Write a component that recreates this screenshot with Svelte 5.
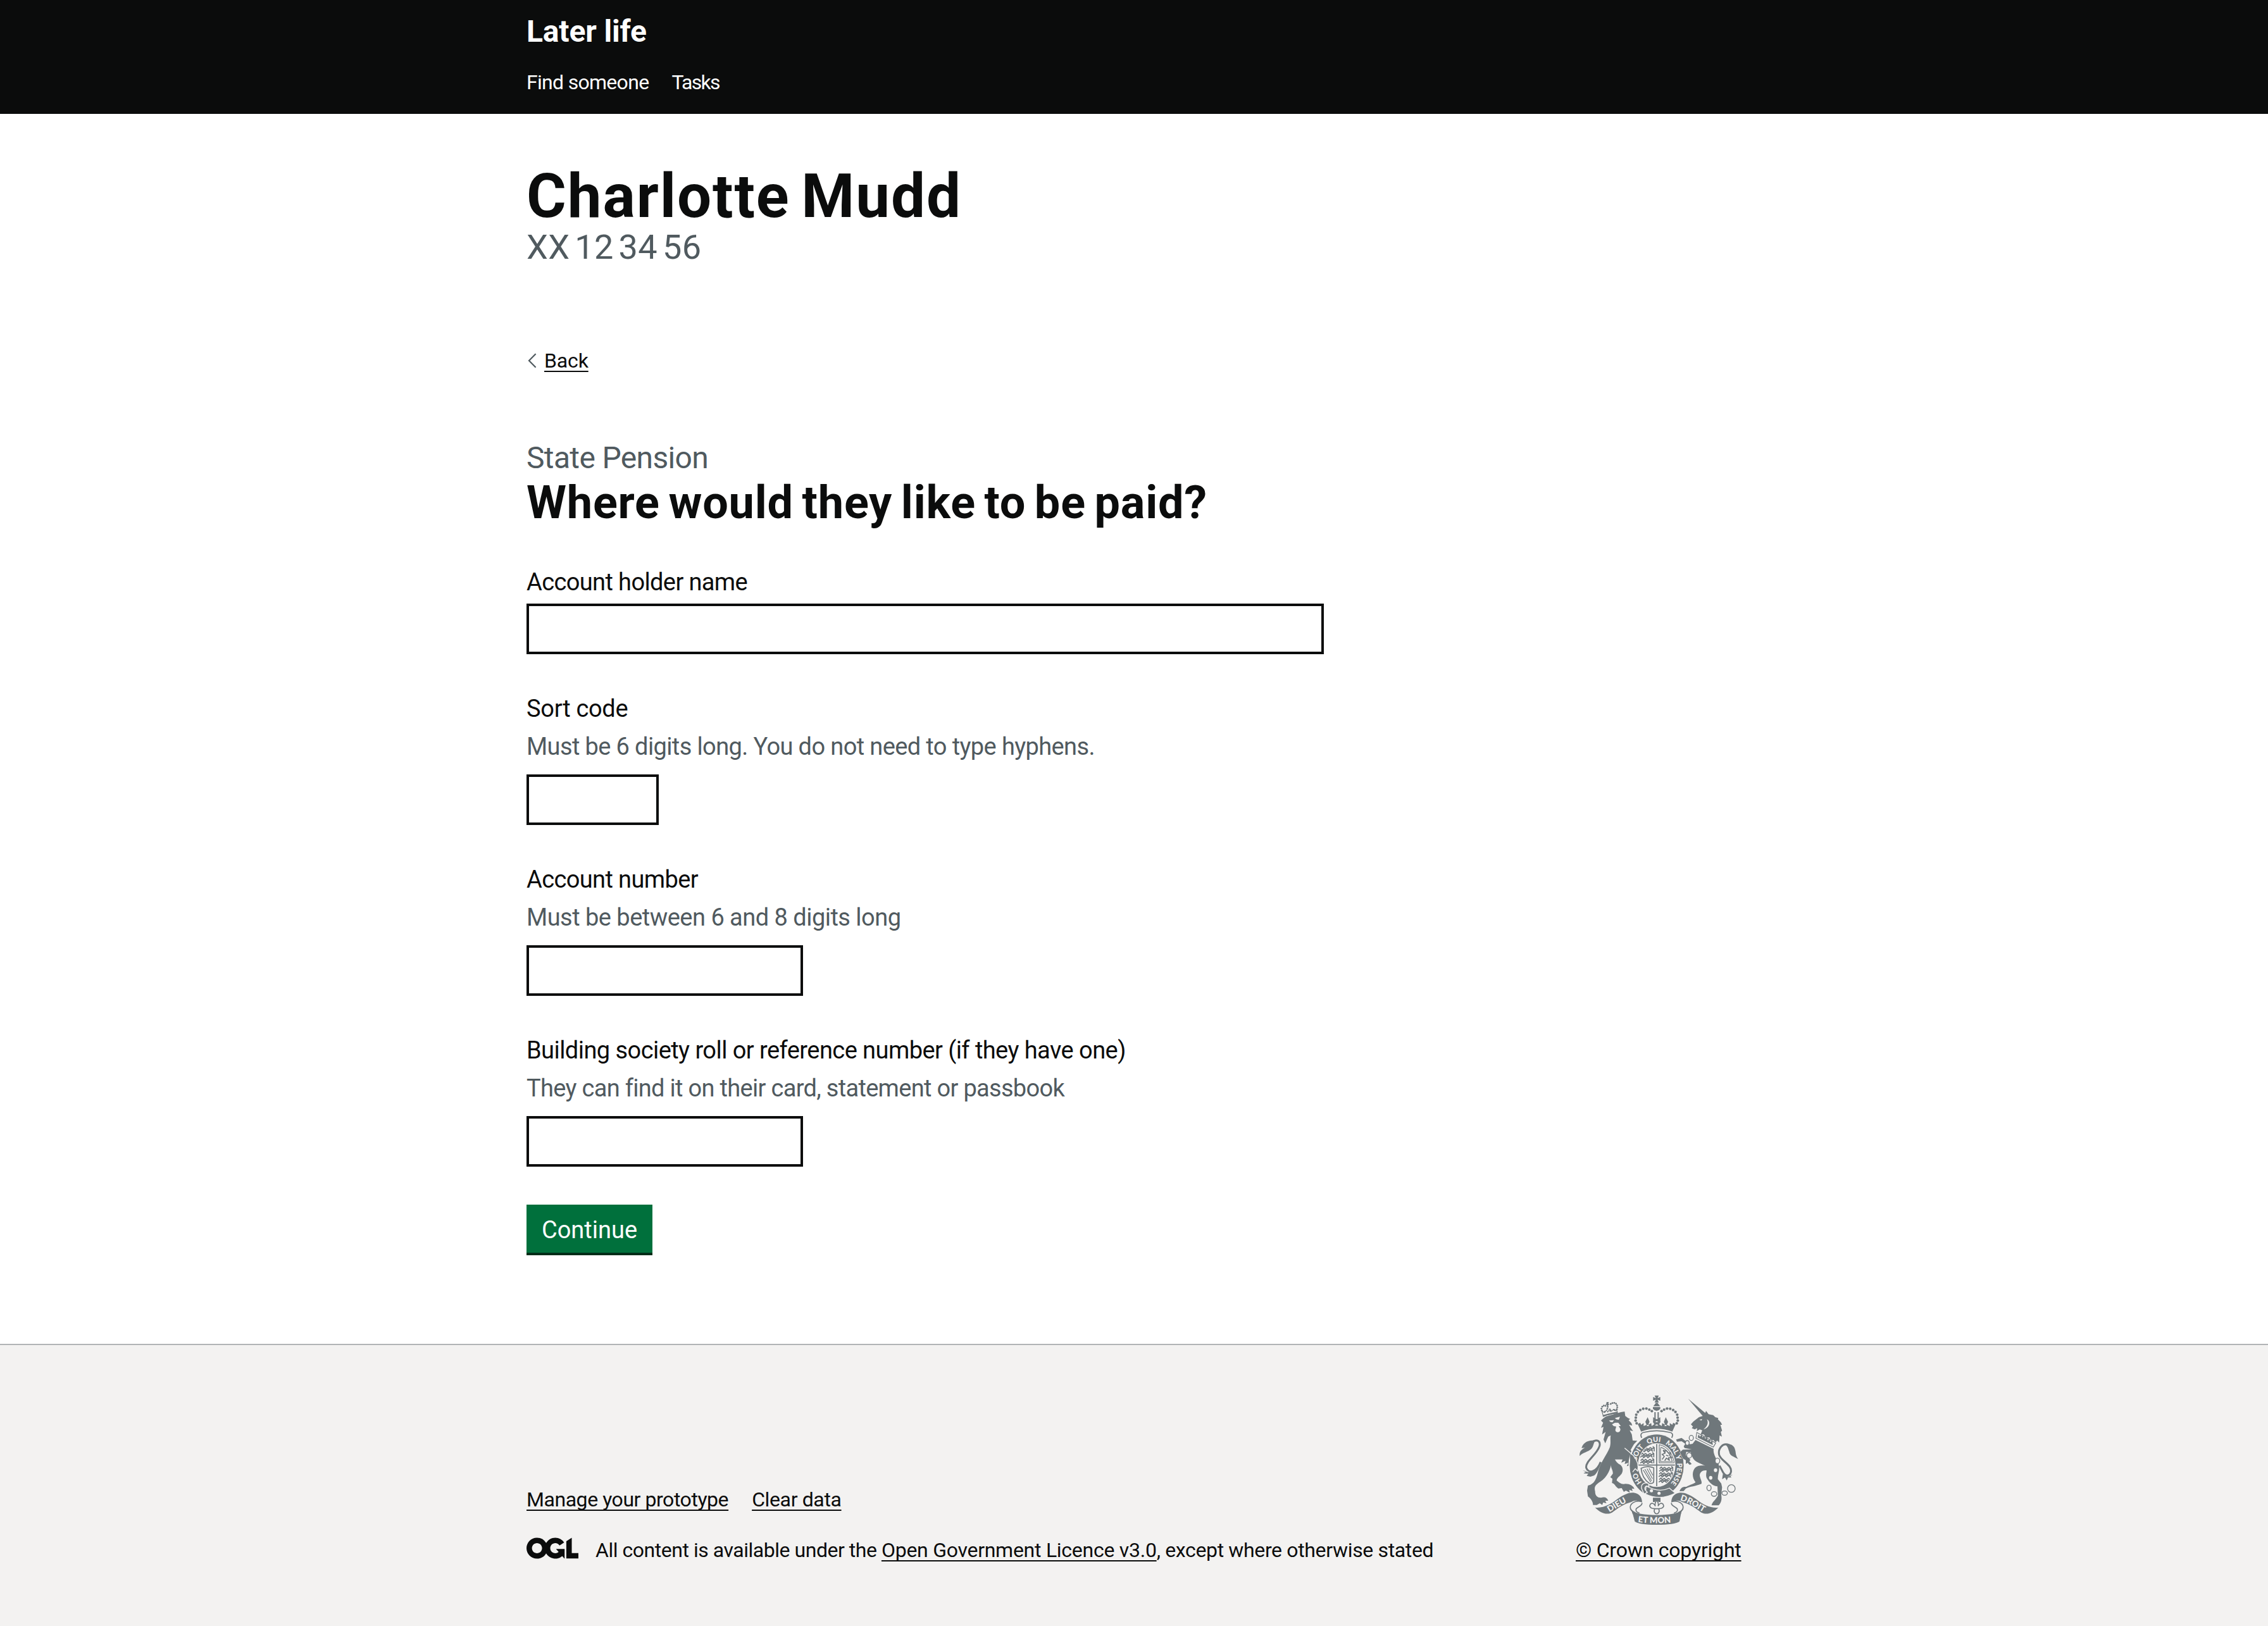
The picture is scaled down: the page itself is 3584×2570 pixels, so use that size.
<script>
  const navigation = [
    { label: 'Find someone', tone: 'find' },
    { label: 'Tasks', tone: 'tasks' }
  ];

  const fields = [
    { id: 'holder', label: 'Account holder name', hint: '' },
    { id: 'sort', label: 'Sort code', hint: 'Must be 6 digits long. You do not need to type hyphens.' },
    { id: 'number', label: 'Account number', hint: 'Must be between 6 and 8 digits long' },
    {
      id: 'roll',
      label: 'Building society roll or reference number (if they have one)',
      hint: 'They can find it on their card, statement or passbook'
    }
  ];

  // Pearls along the left arch of the royal crown; the right arch mirrors them.
  const pearls = [
    [375, 182], [374, 196], [379, 209], [377, 168], [385, 155], [396, 146], [410, 140], [425, 139], [439, 144], [451, 151]
  ];

  const lionPearls = [
    [214, 148], [212, 139], [216, 130], [223, 125], [231, 126], [256, 117], [264, 113], [273, 112],
    [281, 116], [286, 124], [287, 133], [285, 142], [240, 140], [228, 154], [254, 150], [274, 146]
  ];

  const chain = [
    [638, 278, 10, 12], [619, 302, 9, 11], [628, 361, 12, 13], [762, 387, 11, 13],
    [722, 515, 10, 13], [746, 544, 13, 11], [796, 540, 13, 10], [828, 518, 18, 18]
  ];

  const passant = [[396, 334], [394, 362], [394, 390], [484, 428], [482, 454], [482, 480]];

  const motto = [
    ['HO', 80], ['SOIT', 188], ['QUI', 286], ['MAL', 371], ['Y', 447], ['PENSE', 483]
  ];
</script>

<div class="page">
  <header class="header">
    <div class="container">
      <a class="service" href="#home">Later life</a>
      <nav class="nav">
        {#each navigation as item}
          <a class={item.tone} href="#{item.tone}">{item.label}</a>
        {/each}
      </nav>
    </div>
  </header>

  <main class="container main">
    <h1 class="person">Charlotte Mudd</h1>
    <p class="nino">XX 12 34 56</p>

    <a class="back" href="#back">
      <svg class="chevron" viewBox="0 0 16 24" aria-hidden="true"><path d="M14.6 1.2 4 12l10.6 10.8" /></svg>
      <span class="link">Back</span>
    </a>

    <p class="caption">State Pension</p>
    <h2 class="question">Where would they like to be paid?</h2>

    <form class="form">
      {#each fields as field}
        <div class="field {field.id}">
          <label for={field.id}>{field.label}</label>
          {#if field.hint}<p class="hint">{field.hint}</p>{/if}
          <input id={field.id} type="text" />
        </div>
      {/each}
      <button class="button" type="button">Continue</button>
    </form>
  </main>

  <footer class="footer">
    <div class="container footer-row">
      <div class="meta">
        <div class="links">
          <a class="link manage" href="#manage">Manage your prototype</a>
          <a class="link clear" href="#clear">Clear data</a>
        </div>
        <div class="licence">
          <svg class="ogl" viewBox="0 0 483.2 195.7" aria-hidden="true">
            <path d="M421.5 142.8V.1l-50.7 32.3v161.1h112.4v-50.7zm-122.3-9.6A47.12 47.12 0 0 1 221 97.8c0-26 21.1-47.1 47.1-47.1 16.7 0 31.4 8.7 39.7 21.8l42.7-27.2A97.63 97.63 0 0 0 268.1 0c-36.5 0-68.3 20.1-85.1 49.7A98 98 0 0 0 97.8 0C43.9 0 0 43.9 0 97.8s43.9 97.8 97.8 97.8c36.5 0 68.3-20.1 85.1-49.7a97.76 97.76 0 0 0 149.6 25.4l19.4 22.2h3v-87.8h-80l24.3 27.5zM97.8 145c-26 0-47.1-21.1-47.1-47.1s21.1-47.1 47.1-47.1 47.1 21.1 47.1 47.1S123.8 145 97.8 145" />
          </svg>
          <p><span class="intro">All content is available under the{' '}</span><a class="link ogl-link" href="#licence">Open Government Licence v3.0</a><span class="outro">, except where otherwise stated</span></p>
        </div>
      </div>

      <div class="copyright">
        <svg class="crest" viewBox="90 60 786 660" role="img" aria-label="Royal coat of arms">
          <defs>
            <path id="motto" d="M474 523A97 113 0 0 1 474 297A97 113 0 0 1 474 523" />
            <path id="dieu" d="M250 631C288 609 316 588 356 572" />
            <path id="droit" d="M584 575C624 582 660 612 712 640" />
            <path id="mon" d="M385 677Q474 688 566 677" />
            <clipPath id="oval"><ellipse cx="474" cy="407" rx="86" ry="100" /></clipPath>
          </defs>

          <!-- Lion: tail, body, face and small crown -->
          <path class="line tail" d="M208 392C190 440 150 450 140 420C134 388 198 352 204 312C206 288 186 284 164 300" />
          <path d="M186 290C160 288 126 294 118 326L134 325C114 334 107 346 109 364C124 346 148 346 164 330C178 314 172 300 186 290Z" />
          <path d="M124 432L141 437L127 446L150 448L142 458L160 462L178 456C196 440 200 418 214 392C196 408 186 430 162 438C150 442 136 440 124 432Z" />
          <path d="M210 196C222 184 230 176 242 174L304 156L322 153L325 174L338 184L348 188L341 194L354 208L358 220L343 216L352 232L362 246L346 242L356 262L360 290L382 292L366 308L350 336L364 352L380 376L386 402L384 440L374 418L366 436L360 410L350 432L344 410L332 412L340 396L322 402L326 386L306 396L312 380L276 380C282 392 290 400 302 406C314 416 316 434 308 448C298 462 286 466 284 480C296 490 306 500 326 496C346 496 364 506 368 520L356 518L360 530L344 524L346 538L328 528L318 534L308 516L292 518C276 508 276 494 262 492L264 472L254 464L266 448C268 430 254 420 258 404C250 444 230 470 206 486C184 500 176 510 182 532C182 552 192 562 210 562C228 556 240 562 244 576L230 576L236 588L220 584L216 596L204 588L190 596L172 596C172 580 162 566 148 556L144 528L148 504L160 500C180 490 188 470 194 446C206 394 232 370 252 322C258 300 252 282 256 266L244 272L230 304L222 286L232 250L215 262L222 226L210 230L220 206Z" />
          <g class="cut">
            <path d="M248 196L272 194L264 204L254 202ZM276 184L300 178L294 192L282 190Z" />
            <path d="M262 214L276 206L292 206L304 222L294 222L302 236C302 256 278 256 278 240L282 224L270 222Z" />
          </g>
          <path d="M220 172L214 150L226 158L236 146L242 156L252 140L260 152L270 142L280 150L284 142L288 160Q250 162 220 176Z" class="line fine" />
          <path d="M218 170Q252 160 288 154L290 162Q250 166 222 178ZM236 108L248 108L244 114L250 120L244 122L246 134L238 134L238 122L232 120L236 114Z" />
          {#each lionPearls as [x, y]}
            <circle cx={x} cy={y} r="4.2" />
          {/each}

          <!-- Crown -->
          {#each pearls as [x, y]}
            <circle cx={x} cy={y} r="6.3" />
            <circle cx={948 - x} cy={y} r="6.3" />
          {/each}
          <path d="M464 77H484L478 90L491 84V102L478 97L484 110H464L470 97L457 102V84L470 90ZM470 112H478L490 128H458ZM456 132H491V140Q474 160 456 140ZM463 156H469V186H463ZM478 156H484V186H478Z" />
          <path d="M384 212L396 206L400 216L412 208L412 222L426 216L420 202L431 180L440 202L434 216L448 208L450 222L462 214L456 198L474 204L492 198L486 214L498 222L500 208L514 216L508 202L517 180L528 202L522 216L536 222L536 208L548 216L552 206L564 212L548 248Q474 222 400 248Z" />
          <path d="M457 180L474 190L491 180V206L474 198L457 206Z" />
          <path class="cut" d="M426 222Q432 210 438 222ZM510 222Q516 210 522 222ZM466 220Q474 208 482 220Z" />
          <path class="line" d="M403 278C394 262 402 254 412 252Q474 236 536 252C548 254 554 262 545 278" />

          <!-- Garter with motto, strap and buckle -->
          <ellipse class="halo" cx="474" cy="410" rx="130" ry="150" />
          <ellipse cx="474" cy="410" rx="128" ry="148" />
          <ellipse class="cut" cx="474" cy="407" rx="89" ry="104" />
          <g class="motto">
            {#each motto as [word, start]}
              <text><textPath href="#motto" startOffset={start}>{word}</textPath></text>
            {/each}
          </g>
          <path d="M325 332L362 366L386 402L382 442L370 420L360 442L350 414L346 350Z" />
          <path class="line gap" d="M322 326L364 362Q392 396 384 436L372 424L360 440" />
          <path class="buckle" d="M424 506Q484 540 534 516L562 540Q490 578 420 544Z" />
          <path class="buckle" d="M404 522C396 502 412 486 434 494L438 508L424 506Q414 514 420 526L430 536L414 544Z" />
          <circle class="cut" cx="449" cy="529" r="7.5" />
          <circle class="cut" cx="485" cy="541" r="7.5" />

          <!-- Unicorn: horn, head, collar, body, tail and chain -->
          <path d="M623 92L704 160L708 150L720 166L742 170L752 180L766 184L764 190L778 204L784 216L776 216L784 244L778 250L783 272L772 266L770 300L760 290L752 304L744 288L730 292L724 276L706 276L698 262L682 262L690 242L678 238L664 246L666 232L654 238L640 232L646 224L636 214L648 200L674 180L692 174Z" />
          <path class="cut" d="M676 192L690 188L686 196ZM712 190C732 200 724 232 696 238C716 222 720 206 712 190Z" />
          <path d="M664 252L758 300L744 326L658 284Z" class="cut" />
          <path d="M664 252L754 302L742 322L660 280Z" class="line fine" />
          <path d="M668 276L672 262L680 272L686 262L692 276L698 268L704 282L712 276L716 290L726 284L728 298L738 292L740 312Z" />
          <path class="fetlock" d="M658 288L744 330C740 356 758 374 768 404C776 430 762 452 764 474L780 494L784 512L780 548C784 570 780 584 768 598L734 598C738 580 754 572 764 552L762 508C742 506 726 494 712 470C704 454 712 440 710 432C692 430 678 440 678 456C680 474 690 482 686 496C658 508 634 508 612 518L602 530L582 531C588 516 596 508 614 510C634 498 650 496 658 488C640 466 642 436 656 420C668 408 688 408 704 410C676 396 656 392 646 374C640 364 636 354 636 346L614 344L612 360C620 372 632 376 634 384L628 388L640 402L630 406L620 396L612 402L612 384L598 376L584 346L598 334L640 332L606 326L602 318L610 306L592 294L570 296L566 286L592 278L616 296L632 308L644 306Z" />
          <path class="line tail" d="M818 312C786 298 764 330 770 358C778 388 832 404 826 440C820 462 800 462 788 440L772 410" />
          <path d="M794 308C826 302 842 314 846 336C850 346 846 360 860 378C838 366 820 362 818 344C812 330 812 314 794 308ZM834 452L822 456L828 466L812 466L806 480L798 466L784 474L788 448C800 464 820 464 834 452Z" />
          {#each chain as [x, y, rx, ry]}
            <ellipse class="ring" cx={x} cy={y} {rx} {ry} />
          {/each}
          <ellipse class="cut" cx="753" cy="431" rx="8" ry="9" />
          <ellipse class="cut" cx="730" cy="467" rx="8" ry="9" />

          <!-- Quartered shield -->
          <g clip-path="url(#oval)">
            <path class="line" d="M474 300V512M385 407H563" />
            <g class="beast">
              {#each passant as [x, y]}
                <path d="M{x + 4} {y - 4}l8 -8l6 8l10 -6l8 8l12 -8l8 6l12 -6M{x + 2} {y + 8}l10 -8l6 10l12 -10l8 10l12 -10l10 8M{x + 14} {y}h44M{x + 66} {y + 8}v-18l-7 -5" />
              {/each}
            </g>
            <path class="line fine" d="M486 310V396H556M492 326V390H550M486 310Q540 320 558 396M492 322Q532 334 548 390" />
            <g class="beast">
              <path d="M500 380L510 366L500 356L514 350L506 340L520 338L530 350L540 348L536 362L546 372L530 372L534 384L520 374L512 386M504 336L516 346M518 360L530 364" />
            </g>
            <path class="line" d="M400 422Q430 408 460 420V480Q462 496 440 494Q404 470 400 422Z" />
            <path class="line fine" d="M410 430L446 488M418 426L450 482M428 424L454 472M438 422L456 456" />
          </g>

          <!-- Pendant -->
          <path d="M456 562H492V582H484L474 572L464 582H456Z" />
          <path class="line" d="M474 574Q484 586 481 600Q492 582 504 592Q512 606 496 612L484 614L486 626Q482 638 474 638Q466 638 462 626L464 614L452 612Q436 606 444 592Q456 582 467 600Q464 586 474 574ZM458 614H490" />

          <!-- Scrolls -->
          {#each ['', 'translate(948 0) scale(-1 1)'] as flip}
            <g transform={flip}>
              <path d="M182 608C216 612 250 598 290 566C320 546 344 536 364 538C392 542 404 558 405 584C388 574 370 572 354 582C316 592 290 612 262 632C238 644 212 638 182 608Z" />
              <path class="line" d="M402 580C372 572 342 590 350 616Q360 632 378 636M404 586C408 602 380 604 376 616C374 630 384 632 392 634" />
              <path d="M346 596Q352 622 372 630L374 640L360 640Z" />
            </g>
          {/each}
          <path d="M356 622Q384 644 474 644Q564 644 592 622L582 674Q560 690 474 690Q390 690 370 674Z" />
          <g class="scroll">
            <text><textPath href="#dieu">DIEU</textPath></text>
            <text><textPath href="#droit">DROIT</textPath></text>
            <text><textPath href="#mon">ET MON</textPath></text>
          </g>
        </svg>
        <a class="link" href="#copyright">© Crown copyright</a>
      </div>
    </div>
  </footer>
</div>

<style>
  :global(body) {
    margin: 0;
    background: #fff;
  }

  .page {
    display: flex;
    flex-direction: column;
    min-height: 2570px;
    color: #0b0c0c;
    font-family: Roboto, 'Liberation Sans', sans-serif;
    font-size: 38px;
    line-height: 50px;
  }

  .container {
    width: 1920px;
    margin: 0 auto;
  }

  h1, h2, p {
    margin: 0;
  }

  a {
    color: inherit;
    text-decoration: none;
  }

  .link {
    text-decoration: underline;
    text-decoration-thickness: 2px;
    text-underline-offset: 5px;
    text-decoration-skip-ink: none;
  }

  .header {
    box-sizing: border-box;
    height: 180px;
    padding-top: 20px;
    background: #0b0c0c;
    color: #fff;
  }

  .service {
    display: block;
    font-size: 48px;
    font-weight: 700;
    line-height: 60px;
    letter-spacing: -0.15px;
  }

  .nav {
    display: flex;
    gap: 36px;
    margin-top: 30px;
    font-size: 32px;
    line-height: 40px;
  }

  .find {
    letter-spacing: -0.7px;
  }

  .tasks {
    letter-spacing: -1.7px;
  }

  .main {
    flex: 1;
    padding-top: 80px;
  }

  .person {
    font-size: 96px;
    line-height: 100px;
    letter-spacing: 1.9px;
    word-spacing: -8px;
  }

  .nino {
    padding-top: 1px;
    color: #505a5f;
    font-size: 54px;
    line-height: 60px;
    letter-spacing: 0.4px;
    word-spacing: -6px;
  }

  .back {
    display: flex;
    align-items: center;
    gap: 12px;
    margin-top: 129px;
    font-size: 32px;
    line-height: 40px;
    letter-spacing: -0.15px;
  }

  .chevron {
    width: 16px;
    height: 24px;
    fill: none;
    stroke: #505a5f;
    stroke-width: 2.2;
  }

  .caption {
    margin-top: 104px;
    color: #505a5f;
    font-size: 48px;
    line-height: 60px;
    letter-spacing: -0.65px;
  }

  .question {
    padding-top: 1px;
    font-size: 72px;
    line-height: 80px;
    letter-spacing: 0.8px;
    word-spacing: -5px;
  }

  .form {
    display: flex;
    flex-direction: column;
    align-items: flex-start;
    gap: 60px;
    margin-top: 59px;
    letter-spacing: -0.62px;
  }

  .field {
    display: flex;
    flex-direction: column;
    align-items: flex-start;
  }

  label {
    padding-top: 1px;
  }

  .hint {
    margin: 10px 0 9px;
    color: #505a5f;
  }

  .sort label {
    letter-spacing: -0.3px;
  }

  .number .hint {
    letter-spacing: -0.52px;
  }

  .roll label {
    letter-spacing: -0.56px;
  }

  .roll .hint {
    letter-spacing: -0.69px;
  }

  input {
    box-sizing: border-box;
    width: 437px;
    height: 80px;
    margin: 10px 0 0;
    padding: 10px;
    border: 4px solid #0b0c0c;
    border-radius: 0;
    background: #fff;
    font: inherit;
  }

  .holder input {
    width: 1260px;
    margin-top: 9px;
  }

  .sort input {
    width: 209px;
  }

  .button {
    box-sizing: border-box;
    width: 199px;
    height: 76px;
    padding: 3px 0 0;
    border: 0;
    background: #00703c;
    box-shadow: 0 4px 0 #002d18;
    color: #fff;
    font: inherit;
    text-align: center;
  }

  .footer {
    box-sizing: border-box;
    height: 446px;
    padding-top: 74px;
    border-top: 2px solid #b1b4b6;
    background: #f3f2f1;
    font-size: 32px;
    line-height: 40px;
  }

  .footer-row {
    display: flex;
    align-items: flex-end;
    justify-content: space-between;
  }

  .links {
    display: flex;
    gap: 37px;
    margin-bottom: 40px;
  }

  .manage {
    letter-spacing: -0.45px;
  }

  .intro {
    letter-spacing: -0.47px;
    white-space: pre;
  }

  .clear {
    letter-spacing: -0.37px;
  }

  .licence {
    display: flex;
    gap: 27px;
  }

  .ogl {
    width: 82px;
    height: 34px;
    fill: #0b0c0c;
  }

  .ogl-link {
    letter-spacing: -0.27px;
  }

  .outro {
    letter-spacing: -0.35px;
  }

  .copyright {
    display: flex;
    flex-direction: column;
    gap: 10px;
    width: 262px;
    white-space: nowrap;
    letter-spacing: -0.2px;
  }

  .crest {
    display: block;
    width: 262px;
    height: 220px;
    fill: #6f777b;
  }

  .crest .cut {
    fill: #f3f2f1;
  }

  .crest .line,
  .crest .beast path {
    fill: none;
    stroke: #6f777b;
    stroke-width: 5;
    stroke-linejoin: round;
  }

  .crest .fine {
    stroke-width: 3.5;
  }

  .crest .tail {
    stroke-width: 9;
  }

  .crest .fetlock {
    stroke: #f3f2f1;
    stroke-width: 3;
    paint-order: stroke;
  }

  .crest .ring {
    fill: #f3f2f1;
    stroke: #6f777b;
    stroke-width: 4;
  }

  .crest .halo {
    fill: none;
    stroke: #f3f2f1;
    stroke-width: 8;
  }

  .crest .gap {
    stroke: #f3f2f1;
    stroke-width: 4;
  }

  .crest .buckle {
    stroke: #f3f2f1;
    stroke-width: 4;
    stroke-linejoin: round;
  }

  .crest text {
    fill: #f3f2f1;
    font-family: Lato, sans-serif;
    font-weight: 900;
    letter-spacing: 0;
  }

  .motto {
    font-size: 33px;
  }

  .scroll {
    font-size: 40px;
  }
</style>
